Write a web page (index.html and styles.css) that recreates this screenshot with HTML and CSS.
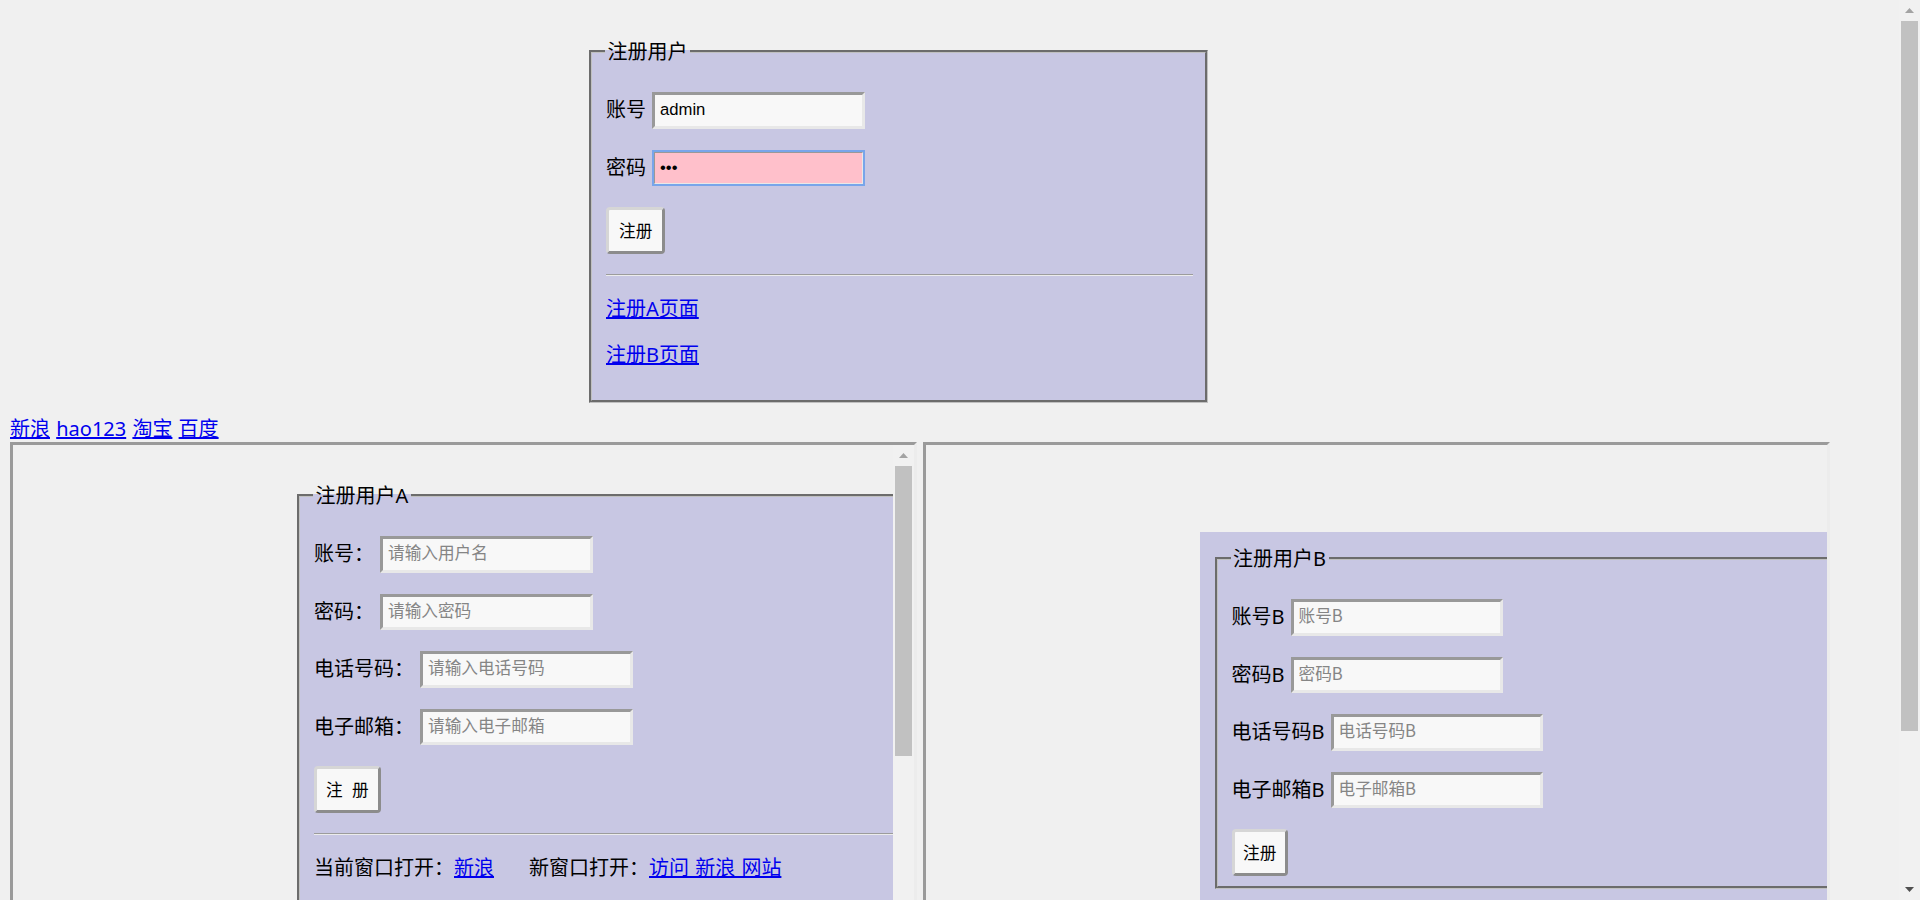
FILE: index.html
```html
<!DOCTYPE html>
<html lang="zh-CN">
<head>
<meta charset="utf-8">
<title>注册用户</title>
<link rel="stylesheet" href="styles.css">
</head>
<body>
<div class="viewport">
  <main class="page">
    <form class="reg">
      <fieldset class="box box-main">
        <legend>注册用户</legend>
        <p class="row"><label>账号</label><input type="text" value="admin"></p>
        <p class="row"><label>密码</label><input type="password" value="123" class="pwd is-focused"></p>
        <p class="row btn-row"><button type="button">注册</button></p>
        <hr>
        <p class="line"><a href="#">注册A页面</a></p>
        <p class="line"><a href="#">注册B页面</a></p>
      </fieldset>
    </form>

    <nav class="links"><a href="#">新浪</a> <a href="#">hao123</a> <a href="#">淘宝</a> <a href="#">百度</a></nav>

    <div class="frames">
      <div class="frame">
        <div class="frame-body">
          <fieldset class="box box-a">
            <legend>注册用户A</legend>
            <p class="row"><label>账号：</label><input type="text" placeholder="请输入用户名"></p>
            <p class="row"><label>密码：</label><input type="password" placeholder="请输入密码"></p>
            <p class="row"><label>电话号码：</label><input type="text" placeholder="请输入电话号码"></p>
            <p class="row"><label>电子邮箱：</label><input type="text" placeholder="请输入电子邮箱"></p>
            <p class="row btn-row"><button type="button" class="spaced">注 册</button></p>
            <hr>
            <p class="line">当前窗口打开：<a href="#">新浪</a><span class="gap">新窗口打开：</span><a href="#" class="wide">访问 新浪 网站</a></p>
          </fieldset>
        </div>
        <div class="scrollbar">
          <div class="sb-btn"><svg width="9" height="5" viewBox="0 0 9 5"><path d="M0 5L4.5 0L9 5Z" fill="#a3a3a3"/></svg></div>
          <div class="sb-track"><div class="sb-thumb thumb-a"></div></div>
          <div class="sb-btn"><svg width="9" height="5" viewBox="0 0 9 5"><path d="M0 0L4.5 5L9 0Z" fill="#505050"/></svg></div>
        </div>
      </div>
      <div class="frame">
        <div class="frame-body">
          <form class="panel-b">
            <fieldset class="box box-b">
              <legend>注册用户B</legend>
              <p class="row"><label>账号B</label><input type="text" placeholder="账号B"></p>
              <p class="row"><label>密码B</label><input type="password" placeholder="密码B"></p>
              <p class="row"><label>电话号码B</label><input type="text" placeholder="电话号码B"></p>
              <p class="row"><label>电子邮箱B</label><input type="text" placeholder="电子邮箱B"></p>
              <div class="btn-only"><button type="button" class="narrow">注册</button></div>
            </fieldset>
          </form>
        </div>
      </div>
    </div>
  </main>
  <div class="scrollbar page-scroll">
    <div class="sb-btn"><svg width="9" height="5" viewBox="0 0 9 5"><path d="M0 5L4.5 0L9 5Z" fill="#a3a3a3"/></svg></div>
    <div class="sb-track"><div class="sb-thumb thumb-page"></div></div>
    <div class="sb-btn"><svg width="9" height="5" viewBox="0 0 9 5"><path d="M0 0L4.5 5L9 0Z" fill="#505050"/></svg></div>
  </div>
</div>
</body>
</html>
```

FILE: styles.css
```css
html, body {
  margin: 0;
  height: 100%;
  overflow: hidden;
}

body {
  background: #f0f0f0;
  color: #000;
  font-family: "Noto Sans", "Noto Sans CJK SC", sans-serif;
  font-size: 20px;
  line-height: 26px;
}

a {
  color: #0000ee;
  text-decoration: underline;
}

.viewport {
  display: flex;
  height: 100%;
}

.page {
  flex: 1;
  min-width: 0;
  padding: 10px;
  overflow: hidden;
}

/* scrollbars */
.scrollbar {
  width: 21px;
  flex: none;
  background: #f1f1f1;
  display: flex;
  flex-direction: column;
}

.sb-btn {
  height: 21px;
  flex: none;
  display: flex;
  align-items: center;
  justify-content: center;
}

.sb-btn svg {
  display: block;
}

.sb-track {
  flex: 1;
  padding: 0 2px;
}

.sb-thumb {
  background: #c1c1c1;
}

.thumb-page {
  height: 710px;
}

.thumb-a {
  height: 290px;
}

/* fieldsets */
.box {
  box-sizing: border-box;
  border: 3px groove #c0c0c0;
  padding: 7px 12.5px 12.5px 14px;
  min-width: 0;
}

.box legend {
  padding: 0 2.5px;
  margin-left: -1px;
  font-size: 20px;
  line-height: 26px;
}

.box-main {
  width: 619px;
  margin: 28.5px 0 13px 579px;
  background: #c8c7e3;
}

.reg {
  margin: 0;
}

.box-a {
  width: 700px;
  margin: 27.5px 0 0 274px;
  background: #c8c7e3;
}

.panel-b {
  width: 720px;
  margin: 77px 0 0 264px;
  padding: 13.5px 0 12.5px 12px;
  background: #c8c7e3;
}

.box-b {
  width: 700px;
  margin: 0 0 0 2.5px;
  padding-bottom: 10px;
}

/* rows */
.row {
  display: flex;
  align-items: center;
  gap: 6px;
  height: 37.5px;
  margin: 20px 0;
}

.row label {
  white-space: nowrap;
}

.btn-row {
  height: auto;
}

.btn-only {
  margin: 0;
}

.line {
  margin: 20px 0;
  line-height: 26px;
  white-space: nowrap;
}

.gap {
  margin-left: 35px;
}

.wide {
  word-spacing: 1px;
}

hr {
  margin: 20px 0;
  height: 0;
  border: 0;
  border-top: 1px solid #9c9c9c;
  border-bottom: 1px solid #ececec;
}

input {
  box-sizing: border-box;
  width: 212.5px;
  height: 36.5px;
  margin: 0;
  padding: 0 5px;
  border: 3px solid;
  border-color: #999999 #e8e8e8 #e8e8e8 #999999;
  background: #f8f8f8;
  color: #000;
  font-family: "Liberation Sans", "Noto Sans CJK SC", sans-serif;
  font-size: 16.67px;
  flex: none;
}

input::placeholder {
  color: #858585;
  font-family: "Noto Sans CJK SC", sans-serif;
}

.pwd {
  background: #ffc0cb;
}

.is-focused {
  outline: 2px solid #78a5ea;
  outline-offset: -2px;
}

button {
  margin: 0;
  padding: 9.5px 10px;
  border: 3px solid;
  border-color: #d6d6d6 #8c8c8c #8c8c8c #d6d6d6;
  border-radius: 4px;
  background: #f8f8f8;
  color: #000;
  font-family: "Noto Sans CJK SC", sans-serif;
  font-size: 16.67px;
  line-height: 22px;
}

.spaced {
  padding-left: 9px;
  padding-right: 9px;
  word-spacing: 5.5px;
}

.narrow {
  padding-left: 8.5px;
  padding-right: 8.5px;
}

/* top links */
.links {
  height: 26px;
  line-height: 26px;
  word-spacing: 1px;
  white-space: nowrap;
}

/* frames */
.frames {
  display: flex;
  gap: 6px;
}

.frame {
  flex: none;
  width: 907px;
  height: 640px;
  box-sizing: border-box;
  border: 3px solid;
  border-color: #9a9a9a #ececec #ececec #9a9a9a;
  display: flex;
  overflow: hidden;
  background: #f0f0f0;
}

.frame-body {
  flex: 1;
  min-width: 0;
  padding: 10px;
  overflow: hidden;
}
```
